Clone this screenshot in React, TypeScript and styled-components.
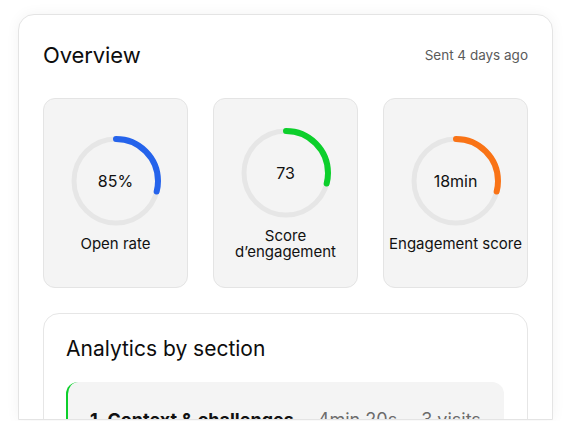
import React from 'react'
import styled, { createGlobalStyle } from 'styled-components'

const GlobalStyle = createGlobalStyle`
  html, body {
    margin: 0;
    padding: 0;
    background: #ffffff;
    overflow: hidden;
  }
  body {
    font-family: Inter, "Noto Sans", "Liberation Sans", sans-serif;
    color: #111111;
  }
`

type Metric = {
  value: string
  label: string
  color: string
  progress: number
}

const metrics: Metric[] = [
  { value: '85%', label: 'Open rate', color: '#2563eb', progress: 0.29 },
  { value: '73', label: 'Score\nd’engagement', color: '#0ccf2b', progress: 0.29 },
  { value: '18min', label: 'Engagement score', color: '#f97316', progress: 0.29 },
]

function Ring({ color, progress, value }: { color: string; progress: number; value: string }) {
  const r = 42
  const c = 2 * Math.PI * r
  return (
    <RingWrap>
      <svg width="92" height="92" viewBox="0 0 92 92">
        <circle cx="46" cy="46" r={r} fill="none" stroke="#e6e6e6" strokeWidth="5" />
        <circle
          cx="46"
          cy="46"
          r={r}
          fill="none"
          stroke={color}
          strokeWidth="6"
          strokeLinecap="round"
          strokeDasharray={`${c * progress} ${c}`}
          transform="rotate(-90 46 46)"
        />
      </svg>
      <RingValue>{value}</RingValue>
    </RingWrap>
  )
}

export default function App() {
  return (
    <>
      <GlobalStyle />
      <Page>
        <Card>
          <Header>
            <Title>Overview</Title>
            <Sent>Sent 4 days ago</Sent>
          </Header>
          <Metrics>
            {metrics.map((m) => (
              <MetricCard key={m.value}>
                <Ring color={m.color} progress={m.progress} value={m.value} />
                <MetricLabel>{m.label}</MetricLabel>
              </MetricCard>
            ))}
          </Metrics>
          <Analytics>
            <SectionTitle>Analytics by section</SectionTitle>
            <SectionRow>
              <SectionName>1. Context &amp; challenges</SectionName>
              <SectionStat>4min 20s</SectionStat>
              <SectionStat>3 visits</SectionStat>
            </SectionRow>
          </Analytics>
        </Card>
      </Page>
    </>
  )
}

const Page = styled.div`
  width: 571px;
  height: 421px;
  padding-top: 14px;
  padding-left: 18px;
  box-sizing: border-box;
  overflow: hidden;
`

const Card = styled.div`
  width: 535px;
  height: 406px;
  box-sizing: border-box;
  border: 1px solid #e4e4e4;
  border-radius: 16px 16px 0 0;
  background: #ffffff;
  box-shadow: 0 0 14px rgba(0, 0, 0, 0.05);
  padding: 24px 24px 0 24px;
  overflow: hidden;
`

const Header = styled.div`
  display: flex;
  align-items: center;
  justify-content: space-between;
  height: 32px;
`

const Title = styled.h1`
  margin: 0;
  font-size: 22px;
  font-weight: 400;
  color: #0d0d0d;
  letter-spacing: -0.1px;
`

const Sent = styled.span`
  font-size: 13.5px;
  color: #5a5a5a;
`

const Metrics = styled.div`
  display: grid;
  grid-template-columns: repeat(3, 145px);
  gap: 25px;
  margin-top: 27px;
`

const MetricCard = styled.div`
  height: 190px;
  box-sizing: border-box;
  background: #f4f4f4;
  border: 1.5px solid #e4e4e4;
  border-radius: 12px;
  display: flex;
  flex-direction: column;
  align-items: center;
  justify-content: center;
  gap: 9px;
`

const RingWrap = styled.div`
  position: relative;
  width: 92px;
  height: 92px;

  svg {
    display: block;
  }
`

const RingValue = styled.span`
  position: absolute;
  inset: 0;
  display: flex;
  align-items: center;
  justify-content: center;
  font-size: 16px;
  color: #111111;
`

const MetricLabel = styled.div`
  font-size: 15px;
  line-height: 16px;
  color: #111111;
  text-align: center;
  white-space: pre-line;
`

const Analytics = styled.div`
  margin-top: 25px;
  border: 1.5px solid #e6e6e6;
  border-radius: 16px;
  padding: 22px 23px 24px 22px;
  background: #ffffff;
`

const SectionTitle = styled.h2`
  margin: 0;
  font-size: 21px;
  font-weight: 400;
  line-height: 26px;
  color: #0d0d0d;
`

const SectionRow = styled.div`
  margin-top: 20px;
  display: flex;
  align-items: center;
  gap: 24px;
  background: #f4f4f4;
  border-left: 2px solid #0ccf2b;
  border-radius: 12px;
  padding: 27px 22px 26px 22px;
`

const SectionName = styled.span`
  font-size: 18px;
  font-weight: 700;
  color: #111111;
`

const SectionStat = styled.span`
  font-size: 18px;
  color: #6b6b6b;
`
